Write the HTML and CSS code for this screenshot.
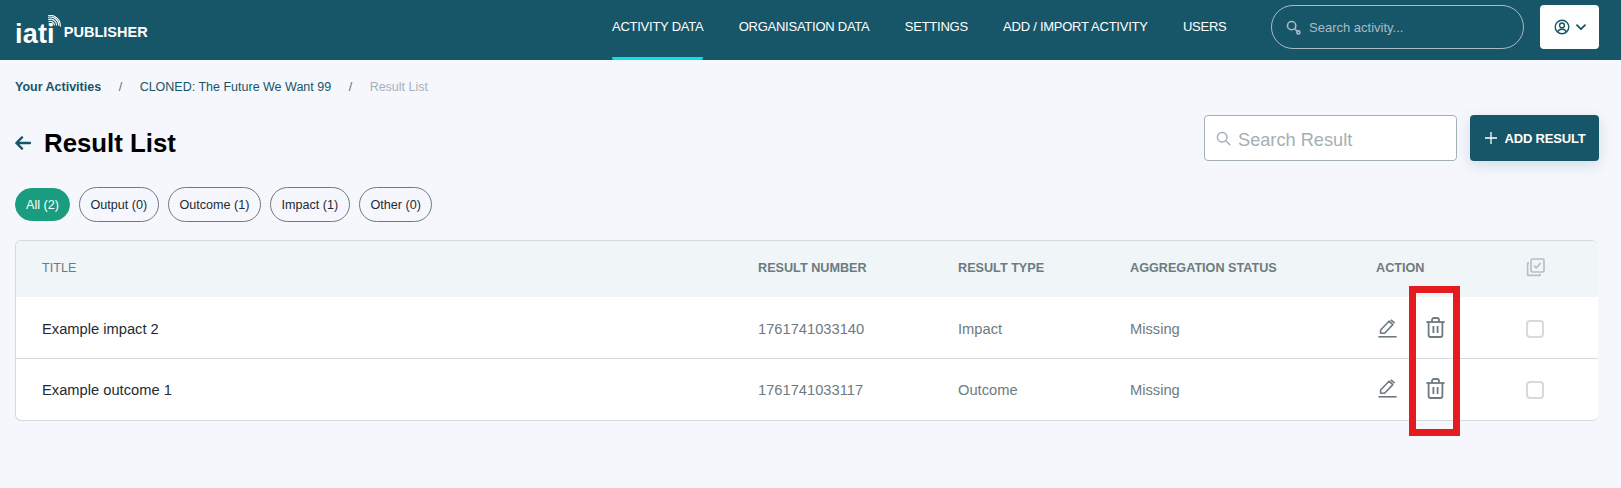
FILE: index.html
```html
<!DOCTYPE html>
<html lang="en">
<head>
    <meta charset="UTF-8">
    <meta name="viewport" content="width=device-width, initial-scale=1.0">
    <title>Result List</title>
    <link rel="stylesheet" href="styles.css">
</head>
<body>
    <header class="topbar">
        <a class="logo">
            <span class="logo-mark">iati
                <svg class="logo-waves" viewBox="0 0 16 16" fill="none" stroke="#fff" stroke-width="1.1" stroke-linecap="round">
                    <circle cx="6" cy="10" r="1.6" fill="#fff" stroke="none"/>
                    <path d="M4 6.6a4 4 0 0 1 5.4 3.4"/>
                    <path d="M3.6 4.4a6.2 6.2 0 0 1 8 5.6"/>
                    <path d="M3.4 2.2a8.4 8.4 0 0 1 10.4 8"/>
                    <path d="M3.6 0.4a10.4 10.4 0 0 1 11.8 10.8"/>
                </svg>
            </span>
            <span class="logo-text">PUBLISHER</span>
        </a>
        <nav class="nav">
            <a class="nav-item active">ACTIVITY DATA</a>
            <a class="nav-item">ORGANISATION DATA</a>
            <a class="nav-item">SETTINGS</a>
            <a class="nav-item">ADD / IMPORT ACTIVITY</a>
            <a class="nav-item">USERS</a>
        </nav>
        <div class="top-search">
            <svg class="key-icon" viewBox="0 0 16 16" fill="none" stroke="#a9bcc4" stroke-width="1.7">
                <circle cx="6" cy="6" r="4.4"/>
                <path d="M9.4 9.4l2.6 2.6"/>
                <circle cx="13.2" cy="13.2" r="1.6"/>
            </svg>
            <span>Search activity...</span>
        </div>
        <button class="user-btn">
            <svg width="16" height="16" viewBox="0 0 16 16" fill="none" stroke="#175669" stroke-width="1.4">
                <circle cx="8" cy="8" r="6.8"/>
                <circle cx="8" cy="6.4" r="2.4"/>
                <path d="M3.6 13c.8-2 2.4-2.8 4.4-2.8s3.6.8 4.4 2.8"/>
            </svg>
            <svg width="10" height="7" viewBox="0 0 10 7" fill="none" stroke="#175669" stroke-width="1.8" stroke-linecap="round" stroke-linejoin="round">
                <path d="M1 1.2l4 4 4-4"/>
            </svg>
        </button>
    </header>

    <main class="content">
        <div class="breadcrumb">
            <a class="crumb-first">Your Activities</a>
            <span class="crumb-sep">/</span>
            <a class="crumb">CLONED: The Future We Want 99</a>
            <span class="crumb-sep">/</span>
            <span class="crumb-last">Result List</span>
        </div>

        <div class="title-row">
            <div class="title">
                <svg width="16" height="14" viewBox="0 0 16 14" fill="none" stroke="#175669" stroke-width="2.4" stroke-linecap="round" stroke-linejoin="round">
                    <path d="M15 7H1.5M7 1.4L1.4 7 7 12.6"/>
                </svg>
                <h1>Result List</h1>
            </div>
            <div class="title-actions">
                <div class="result-search">
                    <svg width="15" height="15" viewBox="0 0 15 15" fill="none" stroke="#a4afb5" stroke-width="1.5" stroke-linecap="round">
                        <circle cx="6.2" cy="6.2" r="4.8"/>
                        <path d="M9.8 9.8l4 4"/>
                    </svg>
                    <span>Search Result</span>
                </div>
                <button class="add-btn">
                    <svg width="14" height="14" viewBox="0 0 14 14" stroke="#fff" stroke-width="1.3"><path d="M7 1v12M1 7h12"/></svg>
                    ADD RESULT
                </button>
            </div>
        </div>

        <div class="chips">
            <span class="chip chip-active">All (2)</span>
            <span class="chip">Output (0)</span>
            <span class="chip">Outcome (1)</span>
            <span class="chip">Impact (1)</span>
            <span class="chip">Other (0)</span>
        </div>

        <div class="table">
            <div class="row head">
                <div>TITLE</div>
                <div>RESULT NUMBER</div>
                <div>RESULT TYPE</div>
                <div>AGGREGATION STATUS</div>
                <div>ACTION</div>
                <div class="check-cell">
                    <svg width="19" height="19" viewBox="0 0 19 19" fill="none" stroke="#b3c0c6" stroke-width="1.7" stroke-linejoin="round">
                        <rect x="5" y="1" width="13" height="13" rx="1.5"/>
                        <path d="M3 5H1.6v11.4a1 1 0 0 0 1 1H14v-1.6"/>
                        <path d="M8 7.6l2.2 2.2 4.4-4.6"/>
                    </svg>
                </div>
            </div>
            <div class="row row-first">
                <div class="cell-title">Example impact 2</div>
                <div>1761741033140</div>
                <div>Impact</div>
                <div>Missing</div>
                <div class="actions">
                    <svg class="icon-edit" viewBox="0 0 19 19" fill="none" stroke="#6d7b81" stroke-width="1.6" stroke-linejoin="round">
                        <path d="M2.6 11L11 2.2l3.8 3.4-8.2 8.6H2.6z"/>
                        <path d="M12.8 0.8l3.8 3.4"/>
                        <path d="M0.4 17.8h18.2"/>
                    </svg>
                    <svg class="icon-trash" viewBox="0 0 19 21" fill="none" stroke="#6d7b81" stroke-width="1.8" stroke-linejoin="round">
                        <path d="M0.4 5h18.2"/>
                        <path d="M6 5V3a2 2 0 0 1 2-2h3a2 2 0 0 1 2 2v2"/>
                        <path d="M2.6 5v13a2 2 0 0 0 2 2h9.8a2 2 0 0 0 2-2V5"/>
                        <path d="M7.4 9v7M11.6 9v7"/>
                    </svg>
                </div>
                <div class="check-cell"><span class="checkbox"></span></div>
            </div>
            <div class="row">
                <div class="cell-title">Example outcome 1</div>
                <div>1761741033117</div>
                <div>Outcome</div>
                <div>Missing</div>
                <div class="actions">
                    <svg class="icon-edit" viewBox="0 0 19 19" fill="none" stroke="#6d7b81" stroke-width="1.6" stroke-linejoin="round">
                        <path d="M2.6 11L11 2.2l3.8 3.4-8.2 8.6H2.6z"/>
                        <path d="M12.8 0.8l3.8 3.4"/>
                        <path d="M0.4 17.8h18.2"/>
                    </svg>
                    <svg class="icon-trash" viewBox="0 0 19 21" fill="none" stroke="#6d7b81" stroke-width="1.8" stroke-linejoin="round">
                        <path d="M0.4 5h18.2"/>
                        <path d="M6 5V3a2 2 0 0 1 2-2h3a2 2 0 0 1 2 2v2"/>
                        <path d="M2.6 5v13a2 2 0 0 0 2 2h9.8a2 2 0 0 0 2-2V5"/>
                        <path d="M7.4 9v7M11.6 9v7"/>
                    </svg>
                </div>
                <div class="check-cell"><span class="checkbox"></span></div>
            </div>
        </div>
    </main>

    <div class="highlight"></div>
</body>
</html>
```

FILE: styles.css
```css
* {
    box-sizing: border-box;
}
body {
    margin: 0;
    height: 488px;
    overflow: hidden;
    position: relative;
    background-color: #f5f7fc;
    font-family: "Liberation Sans", Arial, sans-serif;
    color: #1f2b33;
}

/* top bar */
.topbar {
    height: 60px;
    background-color: #175669;
    display: flex;
    align-items: flex-start;
    padding: 0 22px 0 15px;
    color: #fff;
}
.logo {
    display: flex;
    align-items: flex-end;
    width: 597px;
    height: 42px;
    margin-top: 9px;
    padding-bottom: 2px;
}
.logo-mark {
    position: relative;
    font-size: 27px;
    line-height: 30px;
    font-weight: 700;
    letter-spacing: 0.2px;
}
.logo-waves {
    position: absolute;
    left: 30px;
    top: -4px;
    width: 16px;
    height: 16px;
}
.logo-text {
    margin-left: 9px;
    margin-bottom: 8px;
    font-size: 14.5px;
    line-height: 18px;
    font-weight: 700;
}
.nav {
    display: flex;
    align-self: stretch;
    gap: 35.3px;
    width: 659px;
}
.nav-item {
    height: 60px;
    padding-top: 18px;
    font-size: 13px;
    line-height: 17px;
    letter-spacing: -0.25px;
    border-bottom: 3px solid transparent;
}
.nav-item.active {
    border-bottom-color: #0be0e8;
    border-bottom-left-radius: 2px;
    border-bottom-right-radius: 2px;
}
.top-search {
    width: 253px;
    height: 44px;
    margin-top: 5px;
    border: 1px solid #a9bcc4;
    border-radius: 22px;
    display: flex;
    align-items: center;
    gap: 8px;
    padding: 0 14px;
    font-size: 13px;
    color: #a9bcc4;
}
.key-icon {
    width: 15px;
    height: 15px;
}
.user-btn {
    margin-left: 16px;
    margin-top: 5px;
    width: 59px;
    height: 44px;
    background-color: #fff;
    border: none;
    border-radius: 4px;
    display: flex;
    align-items: center;
    justify-content: center;
    gap: 6px;
    padding: 0;
}

/* page */
.content {
    padding: 0 22px 0 15px;
}
.breadcrumb {
    display: flex;
    align-items: center;
    height: 54px;
    font-size: 12.5px;
    color: #175669;
}
.crumb-first {
    font-weight: 700;
}
.crumb-sep {
    margin: 0 17.5px;
    color: #52717d;
}
.crumb-last {
    color: #a4b2b8;
}
.title-row {
    display: flex;
    justify-content: space-between;
    height: 46px;
    margin-top: 1px;
}
.title {
    display: flex;
    align-items: center;
    gap: 13px;
    height: 56px;
}
h1 {
    margin: 0;
    font-size: 25.8px;
    line-height: 28px;
    font-weight: 700;
    color: #000;
}
.title-actions {
    display: flex;
    gap: 13px;
}
.result-search {
    width: 253px;
    height: 46px;
    background-color: #fff;
    border: 1px solid #a4b0b6;
    border-radius: 4px;
    display: flex;
    align-items: center;
    gap: 7px;
    padding: 1px 11px 0;
    font-size: 18.2px;
    color: #a4afb5;
}
.result-search span {
    padding-top: 3px;
}
.add-btn {
    width: 129px;
    height: 46px;
    background-color: #175669;
    color: #fff;
    border: none;
    border-radius: 4px;
    box-shadow: 0 4px 14px rgba(23, 86, 105, 0.16);
    font-family: inherit;
    font-size: 13px;
    font-weight: 700;
    letter-spacing: -0.2px;
    display: flex;
    align-items: center;
    justify-content: center;
    gap: 7px;
    padding: 0;
}
.chips {
    display: flex;
    align-items: center;
    gap: 9px;
    margin-top: 26px;
}
.chip {
    height: 35px;
    padding: 0 10.6px;
    border: 1px solid #6d7b81;
    border-radius: 18px;
    display: flex;
    align-items: center;
    font-size: 12.6px;
    color: #1f2b33;
}
.chip-active {
    height: 33px;
    padding: 0 10px;
    background-color: #1a9d7f;
    border-color: #1a9d7f;
    color: #fff;
}

/* table */
.table {
    margin-top: 18px;
    width: 1583px;
    background-color: #fff;
    border: 1px solid #d3dbdf;
    border-width: 1px 0 1px 1px;
    border-radius: 6px;
    overflow: hidden;
    font-size: 14.7px;
}
.row {
    display: grid;
    grid-template-columns: 716px 200px 172px 246px 150px 1fr;
    align-items: center;
    height: 61px;
    padding-left: 26px;
    border-top: 1px solid #d3dbdf;
    color: #6d7b81;
}
.row-first {
    padding-top: 3px;
    border-top: none;
}
.row:last-child {
    height: 62px;
}
.row.head {
    height: 56px;
    border-top: none;
    padding-bottom: 3px;
    background-color: #f0f5f8;
    font-size: 12.65px;
    font-weight: 700;
}
.row.head > :first-child {
    font-weight: 400;
}
.cell-title {
    color: #1f2b33;
}
.actions {
    display: flex;
    align-items: center;
    gap: 29px;
    padding-left: 2px;
}
.icon-edit {
    width: 19px;
    height: 19px;
    margin-top: -2px;
}
.icon-trash {
    width: 19px;
    height: 21px;
    margin-top: -3px;
}
.check-cell {
    display: flex;
}
.checkbox {
    width: 18px;
    height: 18px;
    background-color: #fff;
    border: 2px solid #d3dbdf;
    border-radius: 4px;
}

/* red annotation over the delete column */
.highlight {
    position: absolute;
    left: 1409px;
    top: 286px;
    width: 51px;
    height: 150px;
    border: 7px solid #e61b1f;
}
```
